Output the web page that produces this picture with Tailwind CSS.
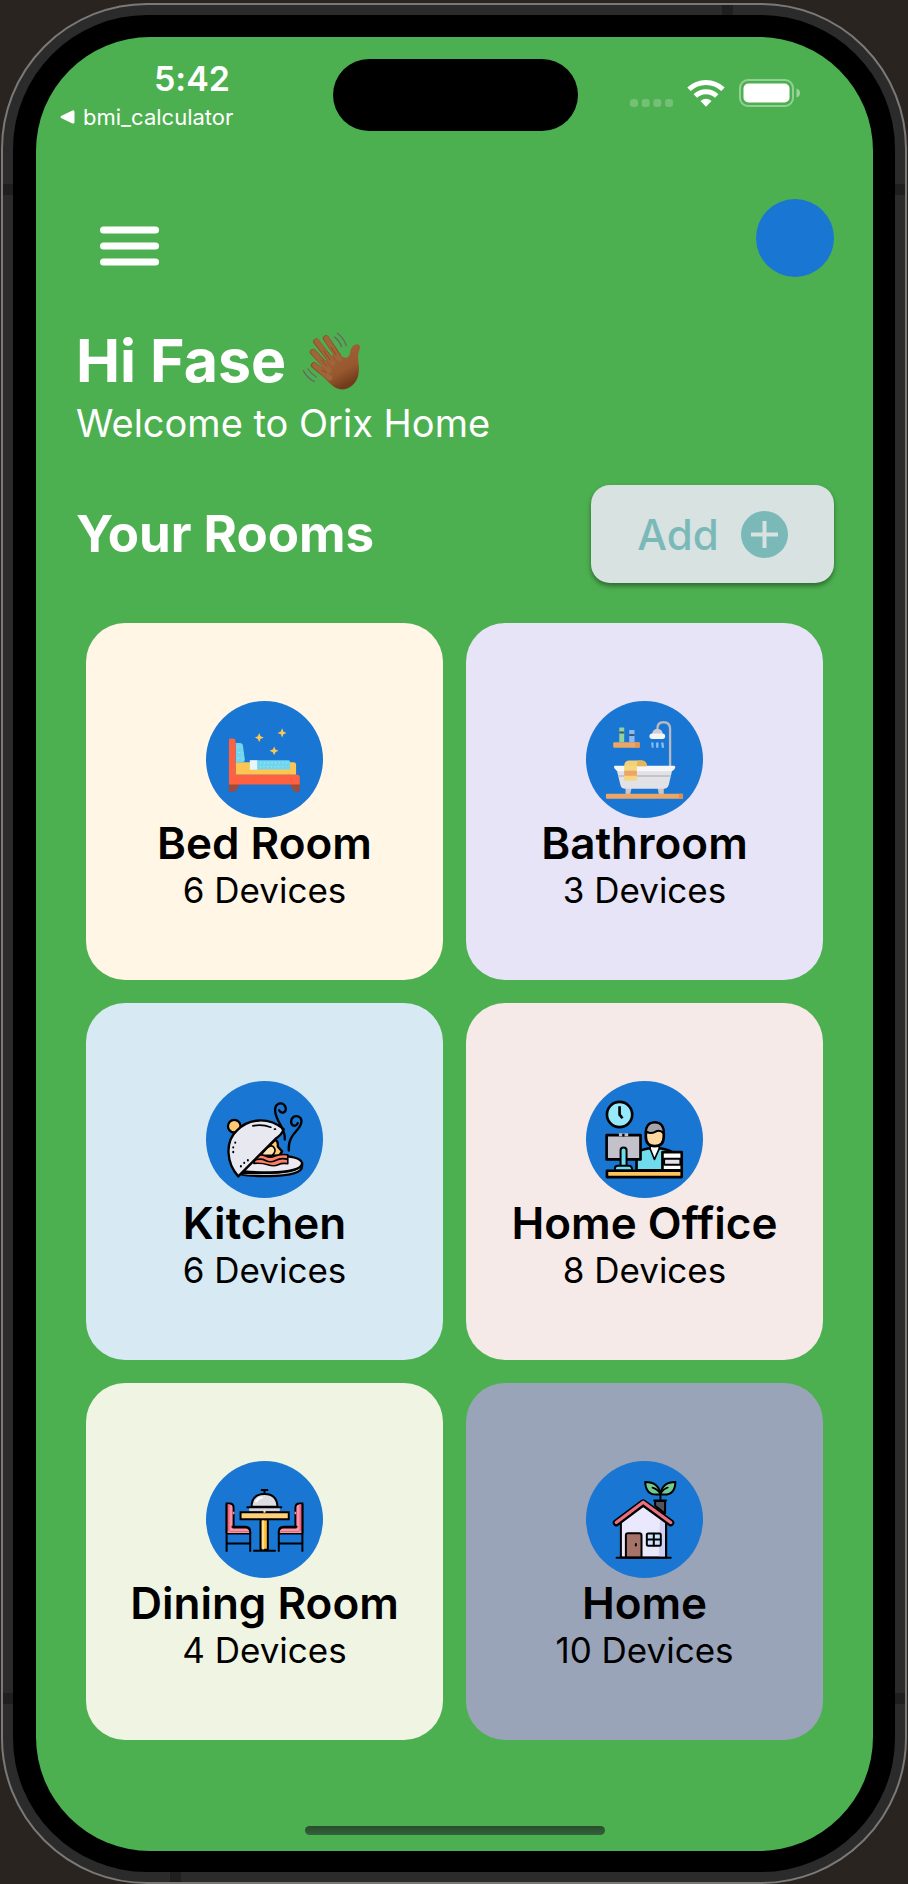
<!DOCTYPE html>
<html lang="en">
<head>
<meta charset="utf-8">
<meta name="viewport" content="width=device-width, initial-scale=1">
<title>Orix Home</title>
<script src="https://cdn.jsdelivr.net/npm/@tailwindcss/browser@4"></script>
</head>
<body class="flex min-h-screen flex-col bg-[#2a2420] px-px pt-[3px] font-['Inter','Liberation_Sans',sans-serif] [font-variant-ligatures:none]">
<div class="relative flex flex-1 flex-col rounded-[146px] border-2 border-[#7b7977] bg-[#2b2b2b] p-[10px]">
  <!-- antenna bands -->
  <span class="absolute left-0 top-[179px] h-[11px] w-[10px] bg-[#1f1f1f]"></span>
  <span class="absolute right-0 top-[179px] h-[11px] w-[10px] bg-[#1f1f1f]"></span>
  <span class="absolute bottom-[178px] left-0 h-[11px] w-[10px] bg-[#1f1f1f]"></span>
  <span class="absolute bottom-[178px] right-0 h-[11px] w-[10px] bg-[#1f1f1f]"></span>
  <span class="absolute right-[172px] top-0 h-[10px] w-[11px] bg-[#1f1f1f]"></span>
  <span class="absolute bottom-0 left-[167px] h-[10px] w-[11px] bg-[#1f1f1f]"></span>

  <div class="flex flex-1 flex-col rounded-[134px] bg-black pt-[22px] pr-[22px] pb-[21px] pl-[23px]">
    <div class="flex flex-1 flex-col rounded-[114px] bg-[#4db050] pr-[39px] pl-10 text-white">

      <header class="grid h-[124px] grid-cols-[1fr_245px_1fr] items-start pt-[22px]">
        <div class="-ml-4 flex w-[180px] flex-col">
          <time class="self-end pr-[10px] text-[34px] leading-[40px] font-semibold">5:42</time>
          <a href="#" class="flex items-center gap-2 text-[22px] leading-[36px]">
            <svg class="h-[14px] w-[15px]" viewBox="0 0 15 14" fill="#fff"><path d="M1 6 12.500 .4Q14.500 0 14.500 2V12Q14.500 14 12.500 13.400L1 8Q0 7 1 6Z"/></svg>
            bmi_calculator
          </a>
        </div>
        <div class="h-[72px] rounded-full bg-black"></div>
        <div class="flex items-center justify-end gap-[14px] pr-[34px] pt-5">
          <svg class="mt-5 h-2 w-[43px]" viewBox="0 0 43 8" fill="#fff" fill-opacity=".22"><rect width="8" height="8" rx="3"/><rect x="11.700" width="8" height="8" rx="3"/><rect x="23.400" width="8" height="8" rx="3"/><rect x="35" width="8" height="8" rx="3"/></svg>
          <svg class="h-7 w-[38px]" viewBox="0 0 38 28"><g fill="none" stroke="#fff" stroke-width="5"><path d="M2 10.300A24.500 24.500 0 0 1 36 10.300"/><path d="M8.300 17A15.300 15.300 0 0 1 29.700 17"/></g><path d="M13.500 22Q19 17.500 24.500 22L19 27.800Z" fill="#fff"/></svg>
          <svg class="h-7 w-[61px]" viewBox="0 0 61 28"><rect x="1" y="1" width="53" height="26" rx="8" fill="none" stroke="#fff" stroke-opacity=".4" stroke-width="2"/><rect x="4.500" y="4.500" width="46" height="19" rx="5" fill="#fff"/><path d="M57.500 9.500Q61 10.500 61 14T57.500 18.500Z" fill="#fff" fill-opacity=".45"/></svg>
        </div>
      </header>

      <main class="flex flex-col">
        <div class="flex items-end justify-between pt-[38px]">
          <button type="button" aria-label="Menu" class="pb-[11px] pl-6"><svg class="h-10 w-[59px]" viewBox="0 0 59 40" fill="#fff"><rect y=".5" width="59" height="7" rx="3.500"/><rect y="16.500" width="59" height="7" rx="3.500"/><rect y="32.500" width="59" height="7" rx="3.500"/></svg></button>
          <button type="button" aria-label="Profile" class="size-[78px] rounded-full bg-[#1976d2]"></button>
        </div>

        <h1 class="mt-[50px] flex items-center gap-4 text-[59px] leading-[68px] font-bold">Hi Fase
          <svg role="img" aria-label="Waving hand" class="h-[58px] w-[59px]" viewBox="730 64 177 174">
            <defs><linearGradient id="skin" x1="0" y1="0" x2=".5" y2="1"><stop offset="0" stop-color="#a0683c"/><stop offset=".7" stop-color="#98582e"/><stop offset="1" stop-color="#713b1d"/></linearGradient></defs>
            <g fill="none" stroke="#6b6762" stroke-width="4" stroke-linecap="round"><path d="M836 68Q855 82 863 105M828 79Q843 91 849 108M734 180Q746 203 767 213M748 175Q758 190 773 199"/></g>
            <g stroke="#8b4f29" stroke-width="19" stroke-linecap="round"><path d="M802 83 838 136M773 93 818 151M763 124 809 174M766 164 808 198"/></g>
            <path d="M800 150 832 124 852 138Q870 148 874 127C876 108 888 99 898 101C910 106 901 118 899 129C896 146 904 169 899 192C894 220 868 239 844 236C822 232 803 207 780 184Z" fill="url(#skin)"/>
            <g stroke="#a0653a" stroke-width="15" stroke-linecap="round"><path d="M803 83 842 145M774 92 822 158M764 124 812 180M768 164 814 202"/></g>
            <path d="M817 109 833 134M794 119 816 150M787 147 805 168M789 178 804 187" stroke="#7d4321" stroke-width="2"/>
          </svg>
        </h1>
        <p class="text-[38px] leading-[56px]">Welcome to Orix Home</p>

        <div class="mt-[34px] flex items-center justify-between">
          <h2 class="text-[51px] leading-[60px] font-bold">Your Rooms</h2>
          <button type="button" class="flex h-[98px] w-[243px] items-center justify-center gap-[22px] rounded-[19px] bg-[#d7e2e1] text-[42px] font-medium text-[#7bb9b9] shadow-[0_3px_5px_rgba(0,0,0,0.4)]">Add
            <svg class="size-[47px]" viewBox="0 0 47 47"><circle cx="23.500" cy="23.500" r="23.500" fill="#7bb9b9"/><path d="M23.500 10V37M10 23.500H37" stroke="#d7e2e1" stroke-width="4"/></svg>
          </button>
        </div>

        <section aria-label="Rooms" class="mt-10 grid grid-cols-2 gap-[23px] pr-[11px] pl-[10px] text-black">
          <button type="button" class="flex aspect-square flex-col items-center rounded-[39px] bg-[#fff6e6] pt-[78px]">
            <svg class="size-[117px] rounded-full bg-[#1976d2]" viewBox="30 30 352 352">
              <path d="M119 214H294Q301 214 301 221V252H119Z" fill="#fdc653"/>
              <path d="M119 156H132Q140 156 141 164L147 207Q147 214 140 215H119Z" fill="#71d5ed"/>
              <path d="M162 208H278Q283 208 283 213V236H162Z" fill="#71d5ed"/><path d="M162 208H184V237H162Z" fill="#e6f6fb"/>
              <path d="M194 216H275M192 228H270M125 168H137M128 185H140M126 202H142" stroke="#b6edf8" stroke-width="3" stroke-dasharray="3 8"/>
              <path d="M99 280H130Q128 296 113 303H99ZM312 280H284Q286 296 298 303H312Z" fill="#a04b3c"/>
              <path d="M99 146Q99 143 104 143H110Q119 143 119 153V252H305Q312 252 312 259V281H99Z" fill="#ff603f"/>
              <g fill="#fdc653"><path d="M190 126 194 136 204 140 194 144 190 154 186 144 177 140 186 136Z"/><path d="M259 112 263 122 272 126 263 130 259 140 255 130 245 126 255 122Z"/><path d="M235 167 239 176 248 180 239 184 235 193 231 184 221 180 231 176Z"/></g>
            </svg>
            <span class="text-[44px] leading-[50px] font-semibold">Bed Room</span><span class="text-[35px] leading-[44px]">6 Devices</span>
          </button>
          <button type="button" class="flex aspect-square flex-col items-center rounded-[39px] bg-[#e6e4f6] pt-[78px]">
            <svg class="size-[117px] rounded-full bg-[#1976d2]" viewBox="35 30 352 352">
              <path d="M250 118V112Q250 94 268 94Q288 94 288 115V228" fill="none" stroke="#b8b8c3" stroke-width="7"/>
              <path d="M234 130Q235 114 250 114T266 130Z" fill="#cfced5"/><rect x="226" y="128" width="47" height="16" rx="8" fill="#f5f4f6"/>
              <path d="M231 155H238V171H233ZM246 155H253V171H246ZM261 155H268L270 171H263Z" fill="#8cc0f7"/>
              <path d="M135 110H150V154H135Z" fill="#8fd29d"/><path d="M165 117H181V154H165Z" fill="#8cb9f0"/><path d="M135 125H150M165 132H181" stroke="#3d5870" stroke-width="6"/>
              <rect x="117" y="154" width="80" height="17" rx="3" fill="#eca768"/><path d="M183 155H194Q197 155 197 158V167Q197 170 194 170H183Z" fill="#e29355"/>
              <path d="M154 289H173L168 310H154ZM250 289H269V310H254Z" fill="#c7c7cd"/>
              <path d="M127 235H295L284 282Q281 294 269 294H153Q142 294 139 284Z" fill="#e2e1e5"/>
              <path d="M132 256H290" stroke="#c4c3c9" stroke-width="6"/>
              <path d="M122 225H300Q307 227 301 235Q297 241 290 241H133Q126 241 121 233Q117 226 122 225Z" fill="#f6f5f7"/>
              <path d="M165 209H201Q218 209 218 226H150Q150 209 165 209Z" fill="#f3d077"/><path d="M190 209H202Q218 209 218 226H188Z" fill="#e2b75c"/><path d="M150 224H188V269H150Z" fill="#f5d57e"/><path d="M150 240H188V255H150Z" fill="#eba565"/>
              <rect x="95" y="309" width="232" height="15" rx="3" fill="#eca768"/><path d="M314 309H324Q327 309 327 312V321Q327 324 324 324H314Z" fill="#e18d50"/>
            </svg>
            <span class="text-[44px] leading-[50px] font-semibold">Bathroom</span><span class="text-[35px] leading-[44px]">3 Devices</span>
          </button>
          <button type="button" class="flex aspect-square flex-col items-center rounded-[39px] bg-[#d7eaf3] pt-[78px]">
            <svg class="size-[117px] rounded-full bg-[#1976d2]" viewBox="30 29 352 352" stroke="#000" stroke-width="7" stroke-linejoin="round" stroke-linecap="round">
              <circle cx="115" cy="165" r="19" fill="#ffc875"/>
              <path d="M128 305Q131 316 220 315Q319 313 319 286V276Q315 304 222 305Z" fill="#c3c8d2"/>
              <path d="M142 292 165 265Q205 252 262 254Q318 258 319 277Q317 302 222 304Q145 304 128 297Z" fill="#ebeaf2"/>
              <path d="M238 206Q248 210 246 226L259 241L250 254L190 252Z" fill="#ffc875"/><path d="M205 240Q225 215 235 230Q243 240 229 253H194Z" fill="#ffe0b0" stroke-width="5"/>
              <path d="M180 256Q195 248 209 255T237 255T276 251V278Q260 275 247 281T216 281T174 277Z" fill="#ff7f68" stroke-width="5"/><path d="M174 268Q194 260 209 268T239 268T274 264" fill="none" stroke-width="5"/>
              <path d="M127 316C92 277 85 213 124 177C160 140 219 137 264 174Q258 191 240 202Z" fill="#e8e8f1"/>
              <g fill="none"><path d="M171 164Q198 158 225 168M236 174H239" stroke-width="5"/><path d="M118 214V215M112 228V229M112 242V243M156 267V268M145 275V276M135 285V286" stroke-width="6"/><path d="M267 205C271 170 239 153 238 118C237 95 260 90 268 105C276 123 257 131 250 117"/><path d="M279 238C276 187 314 180 317 153C319 133 296 129 288 143C280 164 301 170 306 156"/></g>
            </svg>
            <span class="text-[44px] leading-[50px] font-semibold">Kitchen</span><span class="text-[35px] leading-[44px]">6 Devices</span>
          </button>
          <button type="button" class="flex aspect-square flex-col items-center rounded-[39px] bg-[#f5eae7] pt-[78px]">
            <svg class="size-[117px] rounded-full bg-[#1976d2]" viewBox="35 29 352 352" stroke="#000" stroke-width="8" stroke-linejoin="round">
              <circle cx="136" cy="130" r="38" fill="#95e9fa"/><path d="M136 105V130L145 141" fill="none"/>
              <path d="M187 298V247Q190 238 221 232H262Q290 237 300 247V298Z" fill="#70dbed"/>
              <path d="M228 220V233L241 265L255 233V220Z" fill="#fff" stroke-width="5"/>
              <path d="M215 188Q215 154 242 154T269 188V196Q269 225 242 225T215 196Z" fill="#ffd7a0"/><path d="M215 187Q215 154 242 154T269 187Q258 175 245 181Q229 190 219 182Z" fill="#a5a4aa" stroke-width="6"/>
              <rect x="97" y="192" width="102" height="73" fill="#c3c1ca"/><path d="M134 191H162" stroke="#c3c1ca" stroke-width="9"/><path d="M144 192H151"/>
              <path d="M139 286V237Q139 229 148 229T157 237V286Z" fill="#70dbed" stroke-width="6"/><path d="M122 298V292Q122 284 131 284H164Q174 284 174 298Z" fill="#70dbed" stroke-width="6"/>
              <path d="M265 243H323V298H265Z" fill="#fff"/><path d="M270 263H319V281H270Z" fill="#e4e1ec" stroke-width="6"/>
              <rect x="98" y="299" width="225" height="19" fill="#ffc45a"/>
            </svg>
            <span class="text-[44px] leading-[50px] font-semibold">Home Office</span><span class="text-[35px] leading-[44px]">8 Devices</span>
          </button>
          <button type="button" class="flex aspect-square flex-col items-center rounded-[39px] bg-[#f0f4e3] pt-[78px]">
            <svg class="size-[117px] rounded-full bg-[#1976d2]" viewBox="30 27 352 352" stroke="#000" stroke-width="6">
              <path d="M160 165H252V178H160Z" fill="#d7d4dc" stroke="none"/><path d="M167 165Q168 126 206 126T245 165Z" fill="#dedde2"/><path d="M181 149Q187 138 198 137" stroke="#fff" fill="none" stroke-linecap="round"/><path d="M152 166H259M206 113V126M195 114H217" fill="none"/>
              <path d="M194 202H216V294H194Z" fill="#ffbd35"/><path d="M202 204V293" stroke="#ffe099"/>
              <path d="M134 181H279V202H134Z" fill="#ffd079"/><path d="M206 174V183" stroke="#ffe2ad"/><path d="M172 297H240" fill="none"/>
              <g id="dining-chair"><path d="M92 155H101Q113 155 113 168V227H150Q163 227 163 241H92Z" fill="#ff91a4"/><path d="M93 157H101V240H93Z" fill="#ef657f" stroke="none"/><path d="M92 300V156M92 245H163V300M92 275H163M107 225H148Q163 225 163 241" fill="none"/><path d="M95 241H160M113 180V187" fill="none" stroke="#ff91a4" stroke-width="5"/></g>
              <use href="#dining-chair" transform="translate(412 0) scale(-1 1)"/>
            </svg>
            <span class="text-[44px] leading-[50px] font-semibold">Dining Room</span><span class="text-[35px] leading-[44px]">4 Devices</span>
          </button>
          <button type="button" class="flex aspect-square flex-col items-center rounded-[39px] bg-[#9aa4b9] pt-[78px]">
            <svg class="size-[117px] rounded-full bg-[#1976d2]" viewBox="35 27 352 352" stroke="#000" stroke-width="6" stroke-linejoin="round" stroke-linecap="round">
              <path d="M243 147H273V185L243 162Z" fill="#50545c"/><path d="M240 146H276M259 145V119" fill="none"/>
              <path d="M259 127Q254 90 213 90Q215 128 246 128ZM259 127Q264 90 304 90Q303 128 271 128Z" fill="#72cc91"/><path d="M259 126Q251 112 235 107M259 126Q267 112 281 107" fill="none" stroke-width="5"/>
              <path d="M140 203 207 155 276 203V317H140Z" fill="#eae8fc"/><path d="M258 196 273 204V314H254Z" fill="#d0d0f5" stroke="none"/><path d="M276 205V317"/>
              <path d="M126 213 207 153 290 213" fill="none" stroke="#000" stroke-width="21"/><path d="M126 212 207 151 290 212" fill="none" stroke="#e87080" stroke-width="10"/>
              <path d="M155 317V250Q155 244 161 244H195Q202 244 202 251V317Z" fill="#a67368"/><path d="M185 277V281"/>
              <rect x="218" y="245" width="42" height="37" rx="4" fill="#c8e6ff"/><path d="M239 246V281M219 263H259M127 318H290" fill="none"/>
            </svg>
            <span class="text-[44px] leading-[50px] font-semibold">Home</span><span class="text-[35px] leading-[44px]">10 Devices</span>
          </button>
        </section>
      </main>

      <div class="mt-auto flex justify-center pb-4 pt-10"><div class="h-[9px] w-[300px] rounded-full bg-linear-to-b from-[#294b2c] to-[#34633a]"></div></div>
    </div>
  </div>
</div>
</body>
</html>
